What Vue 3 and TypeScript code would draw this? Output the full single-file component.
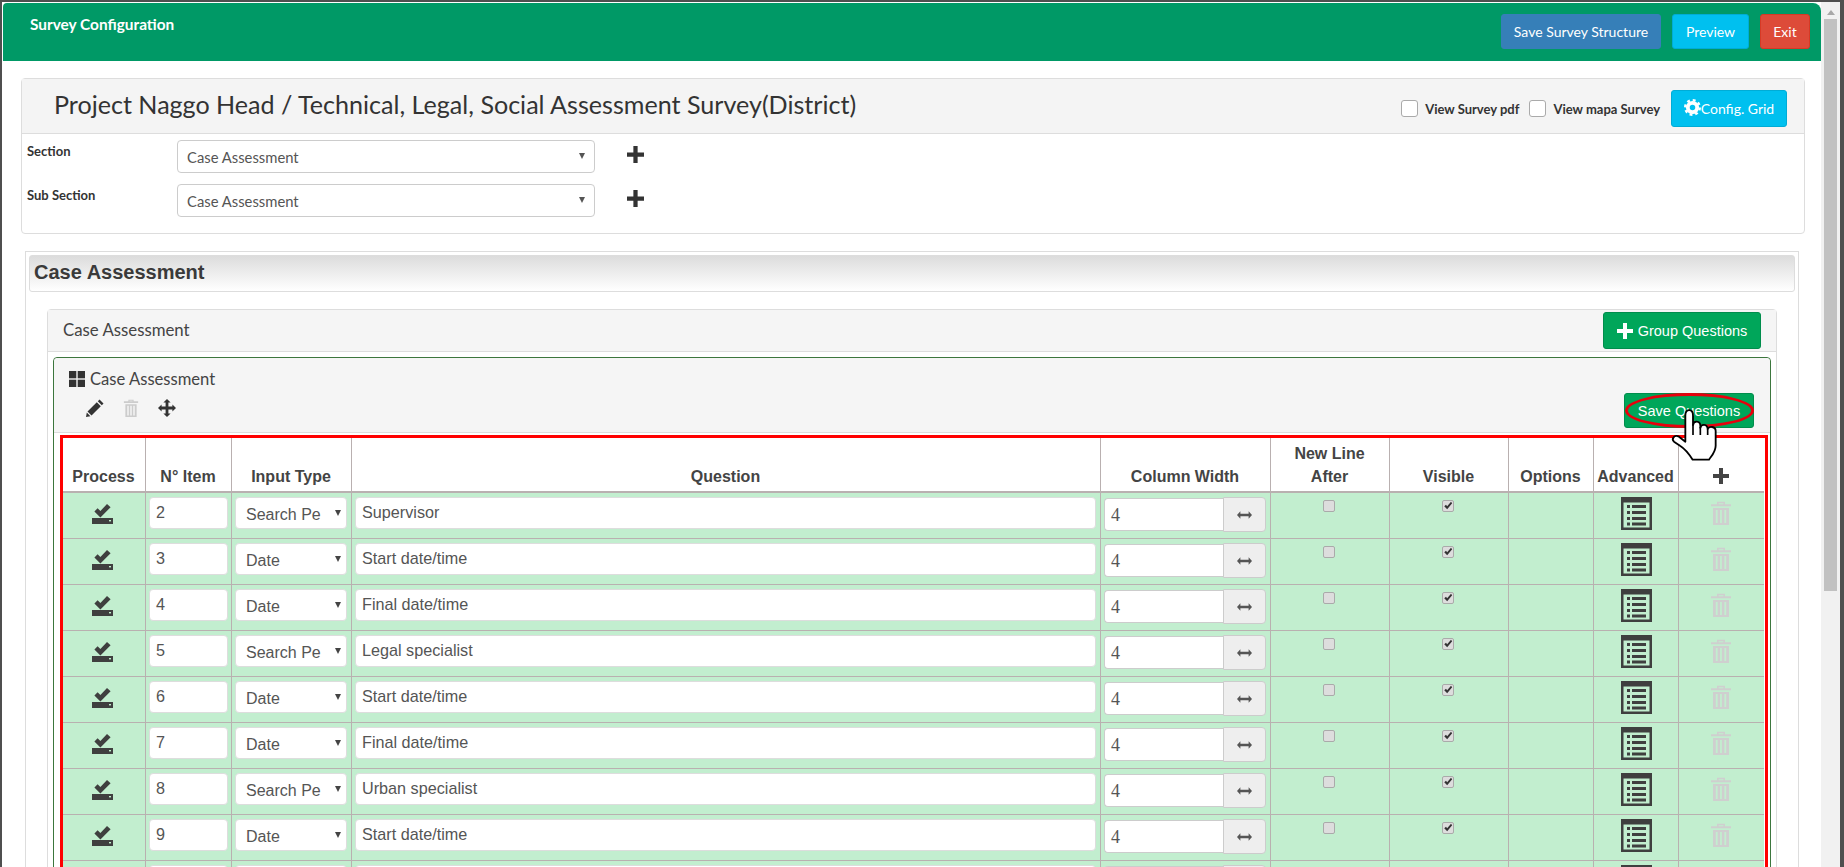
<script setup lang="ts">
interface Row { n: string; type: string; label: string; width: string }
const rows: Row[] = [
  { n: '2', type: 'Search Pe', label: 'Supervisor', width: '4' },
  { n: '3', type: 'Date', label: 'Start date/time', width: '4' },
  { n: '4', type: 'Date', label: 'Final date/time', width: '4' },
  { n: '5', type: 'Search Pe', label: 'Legal specialist', width: '4' },
  { n: '6', type: 'Date', label: 'Start date/time', width: '4' },
  { n: '7', type: 'Date', label: 'Final date/time', width: '4' },
  { n: '8', type: 'Search Pe', label: 'Urban specialist', width: '4' },
  { n: '9', type: 'Date', label: 'Start date/time', width: '4' },
  { n: '', type: '', label: '', width: '' },
]
const sections = ['Section', 'Sub Section']
const plusPath = 'M6 0h4v6h6v4h-6v6H6v-6H0V6h6z'
</script>

<template>
  <div class="shell">
    <div class="main">
      <header class="top">
        <div class="top-title">Survey Configuration</div>
        <div class="top-actions">
          <button class="tbtn blue">Save Survey Structure</button>
          <button class="tbtn cyan">Preview</button>
          <button class="tbtn red">Exit</button>
        </div>
      </header>

      <section class="p1">
        <div class="p1-head">
          <h1 class="p1-title">Project Naggo Head / Technical, Legal, Social Assessment Survey(District)</h1>
          <div class="p1-tools">
            <label class="vw"><span class="vbox"></span>View Survey pdf</label>
            <label class="vw"><span class="vbox"></span>View mapa Survey</label>
            <button class="cfg">
              <svg class="gear" viewBox="0 0 16 16" width="17" height="17">
                <circle cx="8" cy="8" r="4.4" fill="none" stroke="#fff" stroke-width="3.6" />
                <circle cx="8" cy="8" r="6.9" fill="none" stroke="#fff" stroke-width="2.2" stroke-dasharray="2.7 2.72" />
              </svg>Config. Grid
            </button>
          </div>
        </div>
        <div class="p1-body">
          <div v-for="s in sections" :key="s" class="sec-row">
            <div class="sec-label">{{ s }}</div>
            <div class="sec-sel">Case Assessment<i class="arrow"></i></div>
            <svg class="sec-plus" viewBox="0 0 16 16" width="17" height="17"><path :d="plusPath" fill="#333" /></svg>
          </div>
        </div>
      </section>

      <section class="p2">
        <div class="bar">Case Assessment</div>
        <div class="p3">
          <div class="p3-head">
            <span class="p3-title">Case Assessment</span>
            <button class="gbtn group">
              <svg viewBox="0 0 16 16" width="16" height="16"><path :d="plusPath" fill="#fff" /></svg>
              Group Questions
            </button>
          </div>
          <div class="p3-body">
            <div class="gp">
              <div class="gp-head">
                <div class="gp-left">
                  <div class="gp-title">
                    <svg viewBox="0 0 16 16" width="16" height="16" fill="#333">
                      <rect x="0" y="0" width="7.3" height="7.3" /><rect x="8.7" y="0" width="7.3" height="7.3" />
                      <rect x="0" y="8.7" width="7.3" height="7.3" /><rect x="8.7" y="8.7" width="7.3" height="7.3" />
                    </svg>
                    Case Assessment
                  </div>
                  <div class="gp-icons">
                    <svg viewBox="0 0 18 18" width="18" height="18"><path d="M13.5 0.5l4 4L15.8 6.2l-4-4zM10.8 3.2l4 4L5.5 16.5 1.5 12.5zM0.8 13.6l3.6 3.6-4.4 0.8z" fill="#333" /></svg>
                    <svg viewBox="0 0 20 24" width="16" height="18" fill="#ccc">
                      <path d="M6.5 3V1h7v2h6v2.4H0.5V3zM8 3h4V2.4H8z" />
                      <path d="M2.5 7h15v17h-15zM5 9v13h2V9zM9 9v13h2V9zM13 9v13h2V9z" fill-rule="evenodd" />
                    </svg>
                    <svg viewBox="0 0 18 18" width="18" height="18"><path d="M9 0l3.6 3.6h-2.2v4h4V5.4L18 9l-3.6 3.6v-2.2h-4v4h2.2L9 18l-3.6-3.6h2.2v-4h-4v2.2L0 9l3.6-3.6v2.2h4v-4H5.4z" fill="#333" /></svg>
                  </div>
                </div>
                <button class="gbtn save">
                  Save Questions
                  <span class="ring"></span>
                  <svg class="hand" viewBox="0 0 210 255" width="70" height="85">
                    <path d="M76 92C76 70 99 70 99 92L99 120C101 106 120 106 121 122L121 128C124 116 142 116 143 132C147 122 167 124 167 138L167 182C167 200 155 212 147 224L98 224C88 208 76 192 60 182L42 170C33 162 43 149 55 154L76 170Z" fill="#fff" stroke="#000" stroke-width="5.5" stroke-linejoin="round" />
                    <path d="M99 118V150M121 126V150M143 132V150" fill="none" stroke="#000" stroke-width="5" />
                  </svg>
                </button>
              </div>

              <div class="hl">
                <table class="qt">
                  <colgroup>
                    <col style="width:83px" /><col style="width:86px" /><col style="width:120px" /><col style="width:749px" />
                    <col style="width:170px" /><col style="width:119px" /><col style="width:119px" /><col style="width:85px" />
                    <col style="width:85px" /><col style="width:85px" />
                  </colgroup>
                  <thead>
                    <tr>
                      <th>Process</th><th>N° Item</th><th>Input Type</th><th>Question</th><th>Column Width</th>
                      <th>New Line<br />After</th><th>Visible</th><th>Options</th><th>Advanced</th>
                      <th><svg class="th-plus" viewBox="0 0 16 16" width="16" height="16"><path :d="plusPath" fill="#444" /></svg></th>
                    </tr>
                  </thead>
                  <tbody>
                    <tr v-for="(r, i) in rows" :key="i">
                      <td class="c">
                        <svg class="ic-saved" viewBox="0 0 21 20" width="21" height="20">
                          <path d="M2.4 7.4L5.6 4.2 8.4 7 15 0 18.6 3.2 8.4 13.4z" fill="#3f3f3f" />
                          <path d="M0 14h21v6H0z" fill="#3f3f3f" /><rect x="17" y="16" width="2" height="1.4" fill="#c1eecd" />
                        </svg>
                      </td>
                      <td class="pad3"><div class="inp num">{{ r.n }}</div></td>
                      <td class="pad4"><div class="sel"><span class="sel-t">{{ r.type }}</span><i class="arrow dark"></i></div></td>
                      <td class="pad4"><div class="inp">{{ r.label }}</div></td>
                      <td class="pad3">
                        <div class="cw">
                          <div class="cw-in">{{ r.width }}</div>
                          <div class="cw-add">
                            <svg viewBox="0 0 16 8" width="15" height="8"><path d="M0 4l3.6-4v2.6h8.8V0L16 4l-3.6 4V5.4H3.6V8z" fill="#555" /></svg>
                          </div>
                        </div>
                      </td>
                      <td class="c"><span class="ck"></span></td>
                      <td class="c">
                        <span class="ck">
                          <svg viewBox="0 0 12 12" width="10" height="10"><path d="M1.5 6.2L3.6 4.4 5 6.4 9.6 1 11 2.6 5 10z" fill="#333" /></svg>
                        </span>
                      </td>
                      <td></td>
                      <td class="c">
                        <svg class="ic-list" viewBox="0 0 31 33" width="31" height="33">
                          <path d="M0 0h31v33H0zM2.5 5.5v25h26v-25z" fill="#3f3f3f" fill-rule="evenodd" />
                          <g fill="#3f3f3f">
                            <rect x="6" y="8" width="3" height="3" /><rect x="11" y="8" width="14" height="3" />
                            <rect x="6" y="14" width="3" height="3" /><rect x="11" y="14" width="14" height="3" />
                            <rect x="6" y="20" width="3" height="3" /><rect x="11" y="20" width="14" height="3" />
                            <rect x="6" y="25.5" width="3" height="3" /><rect x="11" y="25.5" width="14" height="3" />
                          </g>
                        </svg>
                      </td>
                      <td class="c">
                        <svg class="ic-trash" viewBox="0 0 20 24" width="20" height="24" fill="#cfcfcf">
                          <path d="M6 3.2V0.8h8v2.4h6v2H0v-2zM7.6 3.2h4.8V2.2H7.6z" fill-rule="evenodd" />
                          <path d="M2 7h16v17H2zM4.8 9v13h1.8V9zM9.1 9v13h1.8V9zM13.4 9v13h1.8V9z" fill-rule="evenodd" />
                        </svg>
                      </td>
                    </tr>
                  </tbody>
                </table>
              </div>
            </div>
          </div>
        </div>
      </section>
    </div>

    <aside class="sb">
      <i class="sb-up"></i>
      <div class="sb-thumb"></div>
    </aside>
  </div>
</template>

<style>
html, body { margin: 0; background: #fff; overflow: hidden; }
</style>

<style scoped>
* { box-sizing: border-box; }
button { font: inherit; cursor: pointer; }
.shell { width: 1844px; height: 867px; overflow: hidden; display: flex; background: #fff; border: solid #4f4f4f; border-width: 2px 4px 0 2px; font-family: Lato, "Noto Sans", sans-serif; color: #333; }
.main { width: 1819px; flex: none; padding-top: 1px; }
.sb { width: 19px; flex: none; background: #f1f1f1; display: flex; flex-direction: column; align-items: center; padding-top: 8px; margin-top: 0; }
.sb-up { width: 0; height: 0; border: solid transparent; border-width: 0 4.5px 5px; border-bottom-color: #a8a8a8; }
.sb-thumb { width: 13px; height: 572px; margin-top: 4px; background: #c1c1c1; }

.top { height: 58px; margin-left: 1px; background: #009966; border-radius: 4px 8px 0 0; display: flex; justify-content: space-between; padding: 11px 11px 0 27px; }
.top-title { color: #fff; font-weight: 700; font-size: 15.4px; line-height: 20px; }
.top-actions { display: flex; gap: 10px; align-items: flex-start; }
.tbtn { height: 35px; border: 1px solid transparent; border-radius: 3px; color: #fff; font-size: 14px; padding: 0; }
.tbtn.blue { width: 160px; margin-right: 1px; background: #367fb8; border-color: #367fb8; }
.tbtn.cyan { width: 77px; margin-left: 0; background: #00c0ef; border-color: #00acd6; }
.tbtn.red { width: 50px; margin-left: 1px; background: #dd4b39; border-color: #d73925; }

.p1 { margin: 17px 16px 0 19px; height: 156px; border: 1px solid #ddd; border-radius: 4px; }
.p1-head { height: 55px; background: #f4f4f4; border-bottom: 1px solid #ddd; display: flex; justify-content: space-between; padding: 0 17px 0 32px; align-items: flex-start; }
.p1-title { font-weight: 400; font-size: 25.1px; line-height: 30px; margin: 10px 0 0; color: #333; white-space: nowrap; }
.p1-tools { display: flex; align-items: center; margin-top: 11px; }
.vw { display: flex; align-items: center; font-weight: 700; font-size: 13px; color: #333; margin-right: 10px; white-space: nowrap; }
.vw + .vw { margin-right: 11px; }
.vbox { width: 17px; height: 17px; background: #fff; border: 1px solid #aaa; border-radius: 3px; margin-right: 7px; }
.cfg { width: 116px; height: 37px; background: #00c0ef; border: 1px solid #00acd6; border-radius: 3px; color: #fff; font-size: 14px; display: flex; align-items: center; justify-content: center; padding: 0; }
.gear { margin-top: -3px; }

.p1-body { padding: 6px 0 0 5px; }
.sec-row { display: flex; align-items: flex-start; margin-bottom: 11px; height: 33px; }
.sec-label { width: 150px; font-weight: 700; font-size: 13px; line-height: 16px; padding-top: 3px; }
.sec-sel { position: relative; width: 418px; height: 33px; background: #fff; border: 1px solid #ccc; border-radius: 4px; font-size: 14.8px; line-height: 33px; color: #555; padding-left: 9px; }
.sec-plus { margin: 6px 0 0 32px; }
.arrow { position: absolute; right: 9px; top: 12px; width: 0; height: 0; border: solid transparent; border-width: 6px 3px 0; border-top-color: #555; }
.arrow.dark { right: 5px; top: 12px; border-width: 6px 3.5px 0; border-top-color: #444; }

.p2 { margin: 17px 22px 0 23px; height: 700px; border: 1px solid #ddd; padding: 3px; }
.bar { height: 37px; border: 1px solid #ddd; border-radius: 3px; background: linear-gradient(#dcdcdc, #fff); font-family: "Liberation Sans", Arial, sans-serif; font-weight: 700; font-size: 20px; line-height: 33px; padding-left: 4px; color: #3a3a3a; margin-right: 0; }
.p3 { margin: 17px 18px 0 18px; border: 1px solid #ddd; border-radius: 4px; }
.p3-head { height: 42px; background: #f5f5f5; border-bottom: 1px solid #ddd; display: flex; justify-content: space-between; align-items: flex-start; padding: 2px 15px 0 15px; }
.p3-title { font-size: 16.8px; line-height: 36px; color: #444; }
.gbtn { background: #00a65a; border: 1px solid #008d4c; border-radius: 3px; color: #fff; font-family: "Liberation Sans", Arial, sans-serif; font-size: 14.5px; padding: 0; }
.group { width: 158px; height: 37px; display: flex; align-items: center; justify-content: center; gap: 5px; }
.p3-body { padding: 5px 5px 0 5px; }
.gp { border: 1px solid #3c763d; border-radius: 4px; background: #fff; padding-bottom: 0; }
.gp-head { height: 75px; background: #f5f5f5; border-bottom: 1px solid #ddd; border-radius: 4px 4px 0 0; display: flex; justify-content: space-between; padding: 0 16px 0 15px; }
.gp-title { display: flex; align-items: center; gap: 5px; font-size: 16.6px; color: #444; padding-top: 13px; line-height: 16px; }
.gp-icons { display: flex; align-items: center; gap: 19px; margin: 12px 0 0 17px; }
.save { position: relative; width: 130px; height: 35px; margin-top: 35px; }
.ring { position: absolute; left: 0; top: -1px; width: 129px; height: 35px; border: 3.5px solid #e8000d; border-radius: 50%; }
.hand { position: absolute; left: 35px; top: -9px; z-index: 2; }

.hl { margin: 2px 3px 0 6px; border: 3px solid #f00; border-bottom: 0; width: 1708px; }
.qt { table-layout: fixed; width: 1701px; border-collapse: separate; border-spacing: 0; font-family: "Liberation Sans", Arial, sans-serif; }
.qt th { height: 55px; vertical-align: bottom; padding: 0 1px 3px 0; background: #fff; color: #444; font-size: 16px; line-height: 23px; font-weight: 700; border-right: 1px solid #b9b0b0; border-bottom: 2px solid #b9b0b0; }
.qt th:last-child { border-right: 0; padding-right: 2px; }
.qt td { height: 46px; padding: 0; vertical-align: top; background: #c2eecf; border-right: 1px solid #b9b0b0; border-bottom: 1px solid #b9b0b0; }
.qt td:last-child { border-right: 0; }
.th-plus { display: block; margin: 0 auto 4px; }
.c { text-align: center; }
.pad3 { padding: 4px 3px 0 3px !important; }
.pad4 { padding: 4px 4px 0 3px !important; }
.inp { height: 32px; background: #fff; border: 1px solid #ddd; border-radius: 4px; color: #555; font-size: 16.2px; line-height: 29px; padding-left: 6px; white-space: nowrap; }
.num { padding-left: 6px; }
.sel { position: relative; height: 32px; background: #fff; border: 1px solid #ddd; border-radius: 4px; color: #555; font-size: 16px; line-height: 34px; padding-left: 10px; }
.sel-t { display: block; white-space: nowrap; }
.cw { display: flex; align-items: center; height: 35px; }
.cw-in { flex: none; width: 119px; height: 33px; background: #fff; border: 1px solid #ccc; border-right: 0; border-radius: 4px 0 0 4px; font-family: "Liberation Serif", serif; font-size: 18px; line-height: 33px; padding-left: 6px; color: #555; }
.cw-add { flex: none; width: 43px; height: 35px; background: #eee; border: 1px solid #ccc; border-radius: 0 4px 4px 0; display: flex; align-items: center; justify-content: center; }
.ck { display: inline-flex; align-items: center; justify-content: center; width: 12px; height: 12px; margin: 7px 2px 0 0; background: #ddd; border: 1px solid #aaa; border-radius: 2px; vertical-align: top; }
.ic-saved { display: inline-block; margin-top: 11px; margin-right: 4px; }
.ic-list { display: inline-block; margin-top: 4px; }
.ic-trash { display: inline-block; margin-top: 8px; margin-right: 1px; }
</style>
